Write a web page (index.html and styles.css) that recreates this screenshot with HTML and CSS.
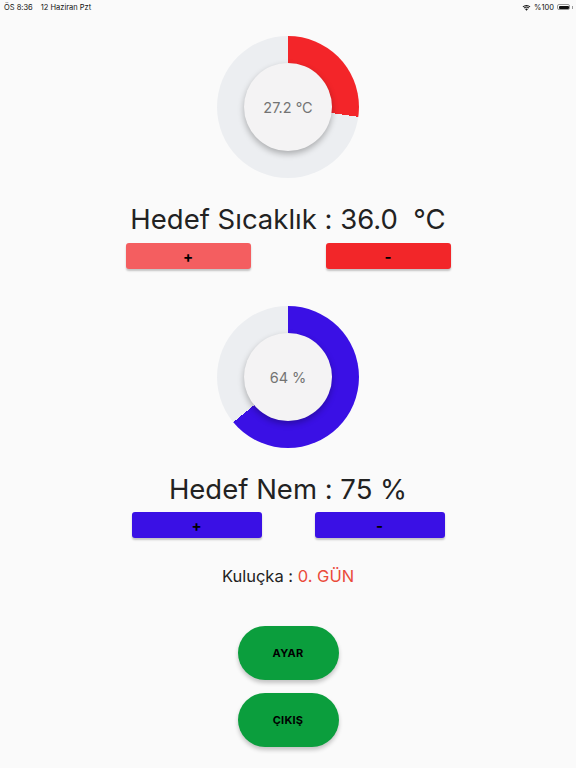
FILE: index.html
```html
<!DOCTYPE html>
<html lang="tr">
<head>
<meta charset="utf-8">
<link rel="stylesheet" href="styles.css">
</head>
<body>
<div class="status">
  <div class="status-left"><span>ÖS 8:36</span><span>12 Haziran Pzt</span></div>
  <div class="status-right">
    <svg class="wifi" width="9" height="7" viewBox="0 0 18 14"><path d="M9 13.5 L6 10.2 A4.5 4.5 0 0 1 12 10.2 Z" fill="#111"/><path d="M3.6 7.6 A7.6 7.6 0 0 1 14.4 7.6 L13 9 A5.6 5.6 0 0 0 5 9 Z" fill="#111"/><path d="M1.2 5.2 A11 11 0 0 1 16.8 5.2 L15.4 6.6 A9 9 0 0 0 2.6 6.6 Z" fill="#111"/></svg>
    <span>%100</span>
    <span class="battery"><span class="battery-fill"></span></span><span class="battery-tip"></span>
  </div>
</div>

<main class="page">
  <div class="gauge gauge-temp">
    <div class="gauge-core">27.2 °C</div>
  </div>
  <div class="target target-temp">Hedef Sıcaklık : 36.0  °C</div>
  <div class="btn-row row-temp">
    <button class="btn btn-red-light">+</button>
    <button class="btn btn-red">-</button>
  </div>

  <div class="gauge gauge-hum">
    <div class="gauge-core">64 %</div>
  </div>
  <div class="target target-hum">Hedef Nem : 75 %</div>
  <div class="btn-row row-hum">
    <button class="btn btn-blue">+</button>
    <button class="btn btn-blue">-</button>
  </div>

  <div class="incub">Kuluçka : <span class="day">0. GÜN</span></div>

  <button class="pill pill-first">AYAR</button>
  <button class="pill">ÇIKIŞ</button>
</main>
</body>
</html>
```

FILE: styles.css
```css
* { box-sizing: border-box; }
html, body { margin: 0; padding: 0; }
body {
  width: 576px;
  height: 768px;
  background: #fafafa;
  font-family: Inter, Roboto, "Liberation Sans", sans-serif;
  font-feature-settings: "calt" 0;
  color: #222;
  overflow: hidden;
}
.status {
  height: 14px;
  display: flex;
  justify-content: space-between;
  align-items: center;
  padding: 0 3px 0 4px;
  font-family: Inter, "Liberation Sans", sans-serif;
  font-size: 7.5px;
  color: #111;
}
.status-left { display: flex; gap: 8px; }
.status-right { display: flex; align-items: center; gap: 2px; }
.wifi { margin-right: 1px; }
.battery {
  width: 13px;
  height: 6px;
  border: 1px solid #999;
  border-radius: 2px;
  padding: 0.5px;
  display: flex;
  margin-left: 1px;
}
.battery-fill { flex: 1; background: #111; border-radius: 1px; }
.battery-tip { width: 1px; height: 3px; background: #999; }

.page {
  display: flex;
  flex-direction: column;
  align-items: center;
}
.gauge {
  width: 142px;
  height: 142px;
  border-radius: 50%;
  display: flex;
  align-items: center;
  justify-content: center;
}
.gauge-temp {
  margin-top: 22px;
  background: conic-gradient(#f32529 0 27.2%, #eceef1 0);
}
.gauge-hum {
  margin-top: 37px;
  background: conic-gradient(#3a10e5 0 64%, #eceef1 0);
}
.gauge-core {
  width: 88px;
  height: 88px;
  border-radius: 50%;
  background: #f4f3f4;
  box-shadow: 0 3px 6px rgba(0,0,0,0.28);
  display: flex;
  align-items: center;
  justify-content: center;
  font-size: 14.5px;
  color: #737373;
}
.target {
  font-size: 27.5px;
  line-height: 34px;
  white-space: pre;
  color: #222;
}
.target-temp { margin-top: 24px; }
.target-hum { margin-top: 24px; }
.btn-row { display: flex; }
.row-temp { margin-top: 7px; gap: 75px; }
.row-temp .btn { width: 125px; }
.row-hum { margin-top: 6px; gap: 53px; }
.row-hum .btn { width: 130px; }
.btn {
  height: 26px;
  border: none;
  border-radius: 3px;
  font-family: Inter, Roboto, "Liberation Sans", sans-serif;
  font-weight: 700;
  font-size: 15px;
  color: #000;
  padding: 0;
  box-shadow: 0 2px 2px rgba(0,0,0,0.22);
}
.btn-red-light { background: #f45e60; }
.btn-red { background: #f22629; }
.btn-blue { background: #3a10e5; }

.incub {
  margin-top: 27px;
  font-size: 16.5px;
  line-height: 22px;
  color: #222;
}
.day { color: #ea4b3a; }

.pill {
  width: 101px;
  height: 54px;
  border: none;
  border-radius: 27px;
  background: #0b9e3d;
  color: #000;
  font-family: Inter, Roboto, "Liberation Sans", sans-serif;
  font-weight: 700;
  font-size: 11px;
  letter-spacing: 0.2px;
  box-shadow: 0 3px 4px rgba(0,0,0,0.22);
  margin-top: 13px;
  padding: 0;
}
.pill-first { margin-top: 39px; }
```
